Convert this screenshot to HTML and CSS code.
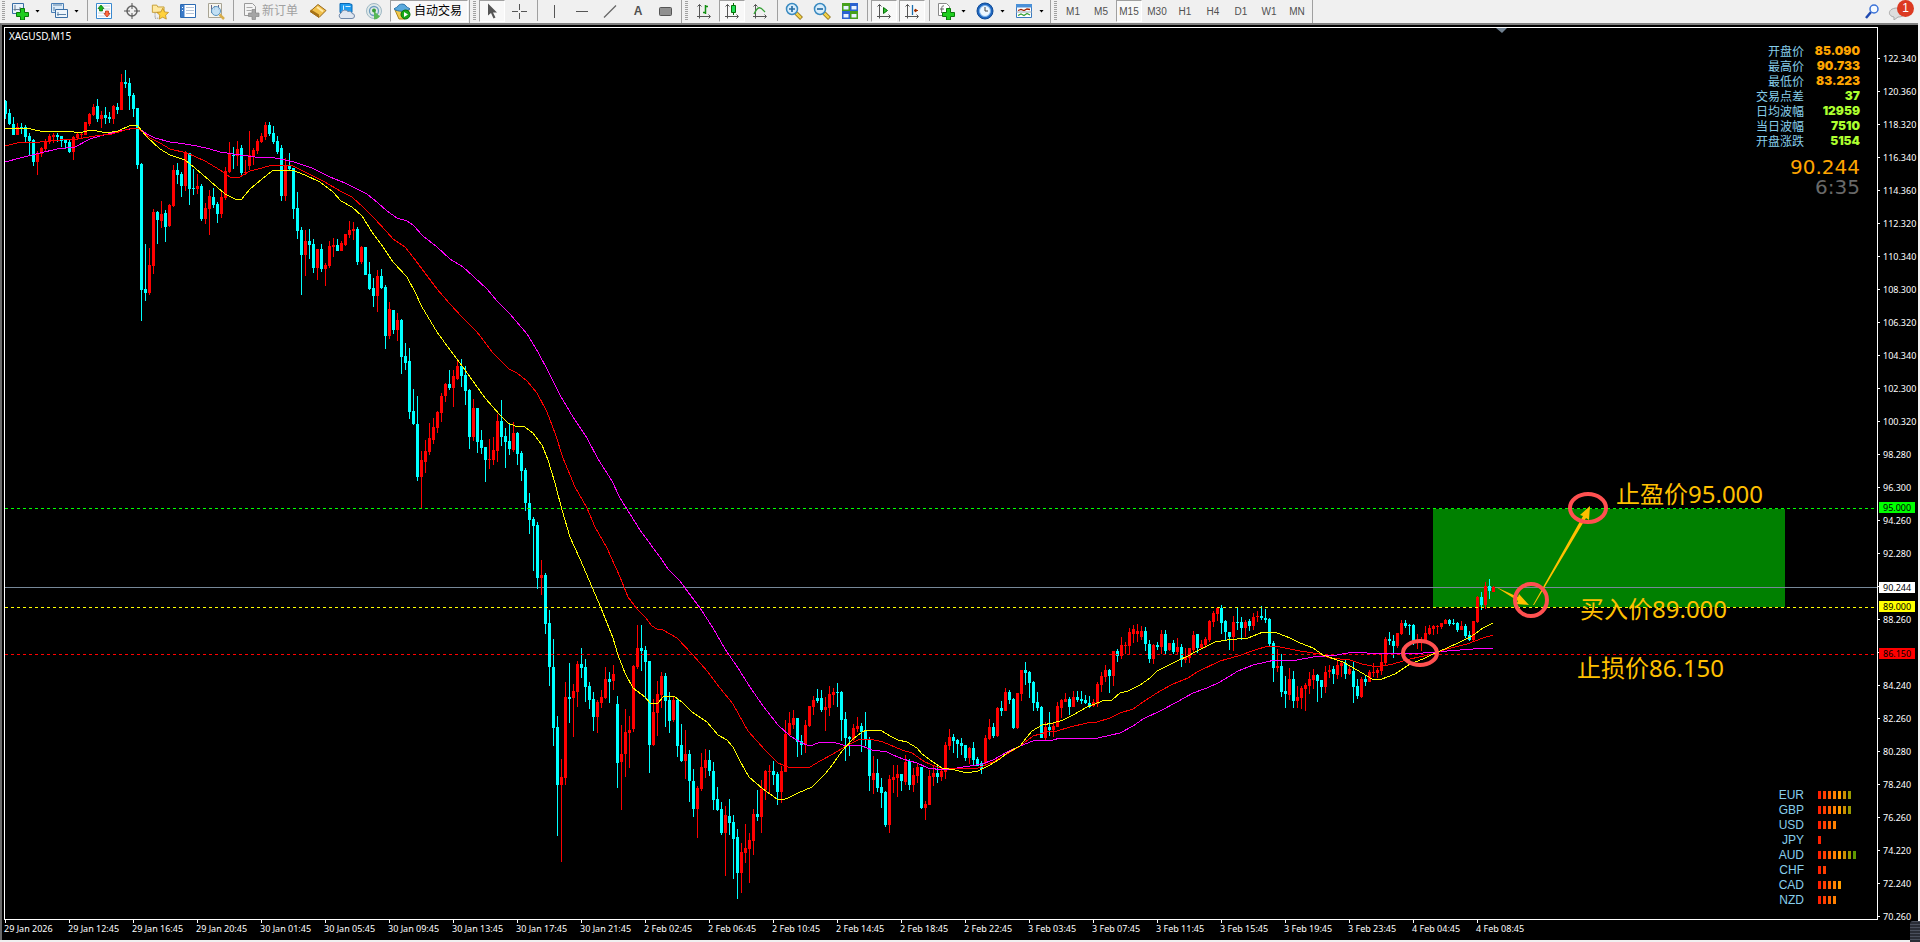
FILE: index.html
```
<!DOCTYPE html>
<html lang="zh-CN">
<head>
    <meta charset="UTF-8">
    <meta name="viewport" content="width=device-width, initial-scale=1.0">
    <title>XAGUSD,M15</title>
    <link rel="stylesheet" href="styles.css">
</head>
<body>
    <header class="toolbar">
        <div class="group first">
            <span class="grip"></span>
            <button class="tool" aria-label="新图表"><svg viewBox="0 0 18 18"><path d="M1.500 1.500h11v10h-11z" fill="#e8f2fb" stroke="#3a6ea5"/><path d="M4 3v6M2.500 7.500h8M9 5v4" stroke="#6b7f94" fill="none"/><path d="M9.500 6.500h4v4h4v4h-4v3.500h-4v-3.500h-4v-4h4z" fill="#1fce1f" stroke="#0a7a0a"/></svg></button>
            <button class="caret" aria-label="新图表菜单"></button>
            <button class="tool" aria-label="图表配置"><svg viewBox="0 0 18 18"><path d="M1.500 1.500h12v9h-12z" fill="#dcebf8" stroke="#4a7fb5"/><path d="M5.500 7.500h12v8h-12z" fill="#eef5fb" stroke="#3a6ea5"/><path d="M3 3h9M4 5v4M8 10v4M7 12.500h9" stroke="#5b82a8" fill="none"/></svg></button>
            <button class="caret" aria-label="图表配置菜单"></button>
            <span class="sep"></span>
            <button class="tool" aria-label="市场报价"><svg viewBox="0 0 18 18"><path d="M1.500 1.500h15v15h-15z" fill="#fff" stroke="#3a8ad0"/><path d="M3 4h12M3 7h12M3 11h12M3 14h12" stroke="#c5d5e5"/><path d="M6 3l3 3.500h-1.500v2.500h-3v-2.500h-1.500z" fill="#19b519" stroke="#087008" stroke-width=".7"/><path d="M12 15l-3-3.500h1.500v-2.500h3v2.500h1.500z" fill="#ff6b42" stroke="#b52b08" stroke-width=".7"/></svg></button>
            <button class="tool" aria-label="数据窗口"><svg viewBox="0 0 18 18"><circle cx="9" cy="9" r="5" fill="none" stroke="#666" stroke-width="1.500"/><path d="M9 1v6M9 11v6M1 9h6M11 9h6" stroke="#555"/></svg></button>
            <button class="tool" aria-label="导航"><svg viewBox="0 0 20 18"><path d="M1.500 2.500h5l1 2h7v6h-13z" fill="#ffe9a0" stroke="#c39a2b"/><path d="M4.500 11v6h3" fill="none" stroke="#777" stroke-dasharray="1 1"/><path d="M13 6l2 4 4.500.6-3.300 3 .8 4.400-4-2.100-4 2.100.8-4.400-3.300-3 4.500-.6z" fill="#ffd23e" stroke="#b8861b" stroke-width=".8"/></svg></button>
            <button class="tool" aria-label="终端"><svg viewBox="0 0 18 18"><path d="M1.500 2.500h15v13h-15z" fill="#fff" stroke="#2d6bb3"/><path d="M2 3h3.500v12h-3.500z" fill="#3a7ac8"/><path d="M7 5.500h8M7 8.500h8M7 11.500h8" stroke="#b5c5d8"/><path d="M3 5.500h1M3 8.500h1" stroke="#fff"/></svg></button>
            <button class="tool" aria-label="策略测试"><svg viewBox="0 0 18 18"><path d="M1.500 1.500h13v14h-13z" fill="#f7f5ee" stroke="#a8a494"/><path d="M4.500 3v8M7.500 4v4M11.500 3v5" stroke="#668"/><circle cx="9" cy="9" r="4.500" fill="#b9dcf5" fill-opacity=".85" stroke="#5b94bf"/><path d="M12.500 12.500l4.500 4.500" stroke="#d9ae4a" stroke-width="2.500"/></svg></button>
            <span class="sep"></span>
            <button class="tool wide off" disabled><svg viewBox="0 0 18 18"><path d="M2.500 1.500h8l3 3v9h-11z" fill="#f4f4f4" stroke="#9a9a9a"/><path d="M4.500 5.500h6M4.500 8.500h5" stroke="#aaa"/><path d="M10 7.500h3.500v3.500h3.500v3.500h-3.500v3h-3.500v-3h-3.500v-3.500h3.500z" fill="#a5a5a5" stroke="#888" stroke-width=".7"/></svg>新订单</button>
            <button class="tool" aria-label="MetaEditor"><svg viewBox="0 0 18 18"><path d="M1 9.500l8-7 8 6-7 7z" fill="#f2c14c" stroke="#96671a"/><path d="M1 9.500l9 6v-3l-8-5z" fill="#a87316"/><path d="M8 5l6 4.500" stroke="#ffe9a8" stroke-width="2"/></svg></button>
            <button class="tool" aria-label="虚拟主机"><svg viewBox="0 0 18 18"><path d="M3 1.500h9l3 1v8h-12z" fill="#1f9df0" stroke="#0b69b5"/><path d="M6.500 3.500v7M8.500 4.500h5" stroke="#d5efff"/><path d="M4 16.500a3 3 0 0 1 0-5.500 4 4 0 0 1 7-1.500 3 3 0 0 1 4 2 2.500 2.500 0 0 1 0 5z" fill="#dfe6f0" stroke="#6f87a8"/></svg></button>
            <button class="tool" aria-label="信号"><svg viewBox="0 0 18 18"><circle cx="9" cy="9" r="7.500" fill="#dfe9e9" stroke="#9fb8c4"/><circle cx="9" cy="9" r="4.500" fill="none" stroke="#6d9cc0" stroke-width="1.300"/><path d="M9 9v8.500a8 8 0 0 0 6-3z" fill="#58b858"/><circle cx="9" cy="8.500" r="2" fill="#3aa03a"/></svg></button>
            <button class="tool auto on"><svg viewBox="0 0 18 18"><path d="M2 8h14l-4 9h-6z" fill="#f2c94c" stroke="#ad8419"/><path d="M1 7c2-2 3-1 4-3s6-3 8 0c1 2 2 1 4 3-4 3-12 3-16 0z" fill="#5aa9dd" stroke="#2b74a8"/><circle cx="12.500" cy="12.500" r="4.500" fill="#18a818" stroke="#087008"/><path d="M11 10l4 2.500-4 2.500z" fill="#fff"/></svg>自动交易</button>
        </div>
        <div class="group">
            <span class="grip"></span>
            <button class="tool on" aria-label="光标"><svg viewBox="0 0 18 18"><path d="M5 1.500v12l3-2.500 2.500 5.500 2-1-2.500-5h4z" fill="#555"/></svg></button>
            <button class="tool" aria-label="十字准线"><svg viewBox="0 0 18 18"><path d="M8.500 2v6M8.500 11v6M1 9.500h6M10 9.500h6" stroke="#555"/></svg></button>
            <span class="sep"></span>
            <button class="tool" aria-label="垂直线"><svg viewBox="0 0 18 18"><path d="M9.500 3v13" stroke="#555"/></svg></button>
            <button class="tool" aria-label="水平线"><svg viewBox="0 0 18 18"><path d="M3 9.500h12" stroke="#555"/></svg></button>
            <button class="tool" aria-label="趋势线"><svg viewBox="0 0 18 18"><path d="M3 15.500l12-12" stroke="#666" stroke-width="1.300"/></svg></button>
            <button class="tool letter">A</button>
            <button class="tool" aria-label="矩形"><svg viewBox="0 0 18 18"><rect x="2.500" y="5.500" width="12" height="8" rx="1" fill="#909090" stroke="#555"/></svg></button>
        </div>
        <div class="group">
            <span class="grip"></span>
            <button class="tool" aria-label="柱状图"><svg viewBox="0 0 18 18"><path d="M4.500 2.500v14M2 14.500h13M2.500 4.500l2-2 2 2M13.500 12.500l2 2-2 2" stroke="#555" fill="none"/><path d="M10.500 3v9M8 10.500h2.500M10.500 4.500h2.500" stroke="#129012" stroke-width="1.500" fill="none"/></svg></button>
            <button class="tool on" aria-label="蜡烛图"><svg viewBox="0 0 18 18"><path d="M4.500 2.500v14M2 14.500h13M2.500 4.500l2-2 2 2M13.500 12.500l2 2-2 2" stroke="#555" fill="none"/><path d="M10.500 1v12" stroke="#087008"/><path d="M8.500 3.500h4v7h-4z" fill="#22e05a" stroke="#087008"/></svg></button>
            <button class="tool" aria-label="折线图"><svg viewBox="0 0 18 18"><path d="M4.500 2.500v14M2 14.500h13M2.500 4.500l2-2 2 2M13.500 12.500l2 2-2 2" stroke="#555" fill="none"/><path d="M3 12c4-8 6-8 11-2" stroke="#35a035" stroke-width="1.300" fill="none"/></svg></button>
            <span class="sep"></span>
            <button class="tool" aria-label="放大"><svg viewBox="0 0 18 18"><path d="M11 11l5.500 5.500" stroke="#8a6a14" stroke-width="4"/><path d="M11 11l5 5" stroke="#f2d24a" stroke-width="2.500"/><circle cx="7" cy="7" r="5.500" fill="#d8edfb" stroke="#3a8ac0" stroke-width="1.500"/><path d="M4 7h6M7 4v6" stroke="#2b6fa5" stroke-width="1.700"/></svg></button>
            <button class="tool" aria-label="缩小"><svg viewBox="0 0 18 18"><path d="M11 11l5.500 5.500" stroke="#8a6a14" stroke-width="4"/><path d="M11 11l5 5" stroke="#f2d24a" stroke-width="2.500"/><circle cx="7" cy="7" r="5.500" fill="#d8edfb" stroke="#3a8ac0" stroke-width="1.500"/><path d="M4 7h6" stroke="#2b6fa5" stroke-width="1.700"/></svg></button>
            <button class="tool" aria-label="平铺窗口"><svg viewBox="0 0 18 18"><path d="M1 1h8v8h-8zM9 9h8v8h-8z" fill="#46a01a"/><path d="M9 1h8v8h-8zM1 9h8v8h-8z" fill="#2a62d0"/><path d="M2.500 4h5v3.500h-5zM10.500 4h5v3.500h-5zM2.500 12h5v3.500h-5zM10.500 12h5v3.500h-5z" fill="#e8f2ff"/></svg></button>
            <span class="sep"></span>
            <button class="tool on" aria-label="自动滚动"><svg viewBox="0 0 18 18"><path d="M4.500 2.500v14M2 14.500h13M2.500 4.500l2-2 2 2M13.500 12.500l2 2-2 2" stroke="#555" fill="none"/><path d="M8.500 5.500l4 3-4 3z" fill="#2fc42f" stroke="#087008"/></svg></button>
            <button class="tool on" aria-label="图表平移"><svg viewBox="0 0 18 18"><path d="M4.500 2.500v14M2 14.500h13M2.500 4.500l2-2 2 2M13.500 12.500l2 2-2 2" stroke="#555" fill="none"/><path d="M9.500 3v10" stroke="#1a6fb0" stroke-width="1.300"/><path d="M15 8.500h-3M13 7l-2 1.500 2 1.500z" fill="#d0501a" stroke="#a03000"/></svg></button>
            <span class="sep"></span>
            <button class="tool" aria-label="指标"><svg viewBox="0 0 18 18"><path d="M1.500 1.500h8l3 3v9h-11z" fill="#fff" stroke="#8a8a8a"/><path d="M7 4c-3-1-2 3-2.500 7M3 7h4" stroke="#666" fill="none"/><path d="M9.500 6.500h4v4h4v4h-4v3.500h-4v-3.500h-4v-4h4z" fill="#1fce1f" stroke="#0a7a0a"/></svg></button>
            <button class="caret" aria-label="指标菜单"></button>
            <button class="tool" aria-label="周期"><svg viewBox="0 0 18 18"><circle cx="9" cy="9" r="8" fill="#1f66c0" stroke="#0e4a96"/><circle cx="9" cy="9" r="5.500" fill="#eef7ff" stroke="#7fb5ea"/><path d="M9 5v4h3" stroke="#444" fill="none"/></svg></button>
            <button class="caret" aria-label="周期菜单"></button>
            <button class="tool" aria-label="模板"><svg viewBox="0 0 18 18"><path d="M1.500 2.500h15v13h-15z" fill="#fff" stroke="#3a7ac0"/><path d="M1 2h16v3.500h-16z" fill="#4a90d8"/><path d="M3 8.500l3-1 3 1 3-1.500 3 .5" stroke="#a02000" stroke-width="1.300" fill="none"/><path d="M1 10h16" stroke="#9ab"/><path d="M3 13.500l3-1.500 3 1.500 3-2 3 1.500" stroke="#35a035" stroke-width="1.300" fill="none"/></svg></button>
            <button class="caret" aria-label="模板菜单"></button>
        </div>
        <div class="group">
            <span class="grip"></span>
            <button class="tool">M1</button>
            <button class="tool">M5</button>
            <button class="tool on">M15</button>
            <button class="tool">M30</button>
            <button class="tool">H1</button>
            <button class="tool">H4</button>
            <button class="tool">D1</button>
            <button class="tool">W1</button>
            <button class="tool">MN</button>
        </div>
        <div class="status">
            <button class="tool" aria-label="搜索"><svg viewBox="0 0 18 18"><path d="M7 10l-5 6" stroke="#1f49b0" stroke-width="2.500"/><circle cx="10" cy="7" r="4" fill="#f5faff" stroke="#3a72d8" stroke-width="1.500"/></svg></button>
            <button class="tool alerts" aria-label="消息"><svg viewBox="0 0 18 18"><path d="M9 6c10 0 10 9 1 9l-4 3v-3c-7-1-6-9 3-9z" fill="#ddd" stroke="#aaa"/></svg><span class="badge">1</span></button>
        </div>
    </header>

    <main class="chart">
        <section class="plot">
            <svg class="canvas" viewBox="5 28 1872 891" preserveAspectRatio="none">
                <rect x="1433" y="509" width="352" height="98" fill="#008000"/>
                <path d="M5 587.500H1877" stroke="#778899"/>
                <path id="bear" fill="#00ffff"/>
                <path id="bull" fill="#ff0000"/>
                <path d="M5 508.500H1877" class="level" stroke="#00ff00"/>
                <path d="M5 607.500H1877" class="level" stroke="#ffff00"/>
                <path d="M5 654.500H1877" class="level" stroke="#ff0000"/>
                <polyline class="ma" stroke="#ff00ff" points="5,162 20,158 40,153 57,149 75,147 90,139 100,136 120,131 130,129 138,128 147,134 155,138 170,142 185,144 197,146 210,149 220,152 240,155 255,157 275,158 285,160 294,162 312,168 330,177 345,183 353,187 367,194 378,203 387,211 397,218 407,221 413,225 423,236 437,247 450,259 463,267 473,276 487,289 497,301 510,314 527,334 538,352 548,371 560,395 573,417 587,438 598,459 612,481 620,498 640,530 662,560 668,569 680,581 685,588 700,608 713,628 725,649 738,668 750,687 763,706 778,725 790,736 802,743 807,745 813,745 820,742 833,742 843,745 862,746 872,750 887,752 893,755 903,759 917,763 928,768 943,770 957,768 970,766 982,764 993,760 1007,752 1020,746 1033,741 1042,740 1053,740 1060,738 1098,738 1120,733 1133,726 1143,719 1160,711 1177,702 1193,693 1207,688 1220,682 1238,671 1253,665 1275,660 1297,660 1313,657 1337,655 1353,652 1367,653 1393,654 1423,653 1447,651 1473,649 1493,648"/>
                <polyline class="ma" stroke="#ff0000" points="5,146 17,143 40,142 60,140 77,139 95,136 112,134 125,130 133,128 138,128 150,138 160,143 170,149 187,153 205,161 220,170 230,177 240,177 250,171 262,168 272,165 280,165 293,166 305,172 323,181 342,192 352,197 363,207 373,217 387,232 393,239 405,247 413,257 422,269 437,289 450,304 463,318 477,332 493,353 509,369 517,373 527,381 537,393 547,412 555,433 563,458 575,487 587,508 595,527 607,548 620,577 628,597 637,609 646,618 652,626 657,629 663,630 677,638 692,654 708,672 720,688 733,704 748,731 765,750 778,763 788,767 810,767 820,761 833,754 848,745 860,739 870,739 883,742 902,750 912,753 925,762 937,767 947,769 957,768 967,769 978,768 993,762 1007,754 1020,746 1033,736 1047,732 1057,731 1070,727 1087,723 1097,722 1110,718 1120,713 1133,709 1143,702 1160,691 1173,684 1188,678 1197,672 1220,661 1238,656 1255,650 1268,646 1280,647 1300,651 1320,654 1330,658 1350,660 1362,664 1377,667 1393,664 1410,659 1433,654 1447,649 1467,644 1483,638 1493,635"/>
                <polyline class="ma" stroke="#ffff00" points="5,129 26,128 40,131 70,131 78,133 92,130 107,133 118,131 131,125 137,125 147,137 160,149 170,155 185,160 195,168 210,181 225,194 235,199 241,200 250,189 262,179 272,171 278,170 292,170 305,175 320,182 333,192 341,201 352,207 362,216 372,232 383,247 393,262 407,277 415,292 422,307 437,332 450,350 460,363 470,377 485,398 500,415 508,423 515,426 525,427 533,433 542,445 548,460 555,483 562,510 570,537 580,559 592,587 601,608 613,638 618,655 625,673 633,688 645,697 650,703 654,704 658,703 664,696 675,697 682,702 692,712 707,722 718,735 727,740 733,747 740,761 749,777 763,789 777,799 782,800 788,798 798,793 812,787 825,774 833,764 842,751 853,739 862,732 867,730 875,730 882,731 890,736 898,740 907,742 917,748 922,754 933,762 942,768 955,770 967,773 978,771 988,766 1000,759 1007,753 1020,746 1027,737 1032,731 1042,725 1053,723 1063,720 1073,715 1087,707 1105,700 1112,700 1120,693 1128,691 1140,685 1150,678 1157,671 1177,661 1188,656 1197,651 1215,642 1227,640 1248,638 1263,632 1277,633 1290,638 1300,643 1313,648 1323,655 1343,662 1357,670 1372,679 1382,679 1395,674 1410,664 1423,659 1433,654 1447,648 1460,642 1470,637 1475,634 1483,628 1493,623"/>
                <path d="M1496 587l22 10 1-3 10 11-13-1 2-3z" fill="#ffc000"/>
                <path d="M1533 605l50-89-3-1 10-9-1 14-3-2-52 87z" fill="#ffc000"/>
                <ellipse cx="1588" cy="508" rx="18" ry="14" class="ring"/>
                <ellipse cx="1531" cy="600" rx="16" ry="16" class="ring"/>
                <ellipse cx="1420" cy="653" rx="17" ry="12" class="ring"/>
                <path d="M1496 28h11l-5 5z" fill="#708090"/>
                <text x="1616" y="503" class="note">止盈价95.000</text>
                <text x="1580" y="618" class="note">买入价89.000</text>
                <text x="1577" y="677" class="note">止损价86.150</text>
            </svg>
            <h1 class="symbol">XAGUSD,M15</h1>
            <div class="info">
                <table class="stats">
                    <tr><th>开盘价</th><td>85.090</td></tr>
                    <tr><th>最高价</th><td>90.733</td></tr>
                    <tr><th>最低价</th><td>83.223</td></tr>
                    <tr class="lime"><th>交易点差</th><td>37</td></tr>
                    <tr class="lime"><th>日均波幅</th><td>12959</td></tr>
                    <tr class="lime"><th>当日波幅</th><td>7510</td></tr>
                    <tr class="lime"><th>开盘涨跌</th><td>5154</td></tr>
                </table>
                <div class="last">90.244</div>
                <div class="timer">6:35</div>
            </div>
            <ul class="strength" id="strength"></ul>
        </section>
        <aside class="price-axis">
            <ul id="prices"></ul>
            <div id="tags"></div>
        </aside>
        <ul class="time-axis" id="times"></ul>
        <span class="scroll-handle"></span>
    </main>

    <script>
        // Cada vela: color (c = baja, r = sube), high, top, bottom, low
        var candles = `
c 100 101 114 119,c 109 113 124 125,c 117 124 135 135,r 123 127 135 135,c 123 127 129 134,c 125 127 137 143,c 133 136 141 155,c 139 140 162 166
r 151 154 162 175,r 147 148 154 157,r 139 141 149 152,r 134 136 142 144,r 133 135 137 143,c 133 135 137 142,c 136 136 141 147,c 140 140 143 148
c 140 142 152 153,r 136 137 152 160,r 132 134 138 140,r 132 134 135 138,r 122 122 135 135,r 113 114 124 126,r 104 107 115 116,c 99 106 119 122
r 111 115 119 128,c 107 115 118 124,c 112 117 119 123,r 105 106 119 124,c 103 107 110 114,r 74 82 110 110,c 70 82 84 88,c 78 83 96 110
c 93 95 109 117,c 108 108 165 169,c 163 164 290 321,c 244 289 293 301,r 248 265 293 295,r 209 212 266 274,c 211 212 220 244,r 201 214 221 228
c 210 213 227 242,r 204 205 226 227,r 165 170 206 207,c 163 170 175 184,c 172 174 186 197,r 151 152 186 191,c 153 153 189 205,c 169 188 189 195
r 174 186 189 194,c 184 186 219 221,r 203 208 219 224,r 190 196 209 235,c 188 197 205 208,c 202 204 214 223,r 191 197 214 218,r 167 171 198 200
r 142 154 172 173,c 147 155 156 169,r 141 149 156 166,c 145 148 173 176,r 160 172 173 175,r 131 155 166 170,r 148 150 156 165,r 139 141 151 154
r 133 136 142 143,r 122 125 137 140,c 122 125 134 136,c 126 133 142 144,c 136 141 152 154,c 145 148 196 201,r 158 165 196 201,c 153 165 169 171
c 168 168 209 219,c 192 208 231 239,c 227 230 255 295,r 230 241 255 276,c 229 241 245 259,c 239 244 268 273,r 249 249 268 280,c 244 249 269 272
r 263 265 269 286,r 241 246 266 268,r 238 245 247 257,c 239 245 251 251,r 241 243 251 251,r 234 234 245 246,r 221 230 235 238,r 222 229 231 240
c 227 229 262 265,r 246 247 262 264,c 247 247 275 275,c 262 274 289 290,c 278 288 296 307,r 270 276 296 312,c 269 276 288 289,c 285 287 336 349
r 302 309 336 339,c 310 310 330 334,r 313 320 330 341,c 319 320 357 374,c 343 356 363 370,c 348 361 412 419,c 389 411 424 425,c 396 424 477 481
r 451 460 477 508,r 440 451 462 473,r 423 438 452 455,r 418 427 440 444,r 411 412 428 433,r 393 396 413 422,r 383 384 396 402,c 370 384 388 390
r 370 376 388 407,r 361 366 379 380,c 359 366 376 387,c 366 375 391 405,c 389 390 437 449,r 399 408 437 441,c 408 408 442 453,c 430 440 448 454
c 447 447 460 482,r 439 459 460 469,r 437 450 460 465,r 414 421 451 462,c 400 421 437 446,c 428 436 442 468,c 424 441 449 455,r 422 433 450 452
c 432 433 454 465,c 451 453 471 481,c 468 470 503 511,c 493 503 520 534,c 517 519 526 571,c 522 525 578 589,r 560 575 578 595,c 573 575 624 634
c 610 623 667 686,c 639 667 728 746,c 716 727 785 836,r 759 777 785 862,r 682 697 778 785,c 663 697 699 723,r 684 691 698 737,r 661 664 692 707
c 648 664 668 678,c 659 667 687 702,c 682 686 700 709,c 692 699 717 731,r 700 702 717 733,r 690 697 703 708,r 667 679 698 699,c 672 679 682 703
r 665 674 681 690,c 696 704 763 788,r 725 754 762 810,r 709 732 754 777,r 716 730 733 768,r 665 666 729 732,r 625 648 667 669,c 625 648 651 671
c 646 650 662 699,c 661 661 745 773,r 699 712 745 746,r 681 694 713 736,r 672 676 695 708,c 673 676 701 727,c 692 700 721 733,r 696 700 720 722
c 699 700 746 757,c 724 745 761 762,r 730 754 761 779,c 750 754 781 802,c 769 781 809 817,r 786 788 809 838,r 753 767 789 791,r 749 760 768 778
c 750 760 771 776,c 762 771 800 810,c 787 799 810 811,c 802 809 833 835,r 806 815 833 876,c 799 816 823 835,c 815 822 839 879,c 829 837 873 899
r 843 852 873 893,r 824 848 853 863,r 833 840 849 883,r 809 814 841 855,c 790 814 817 821,r 780 789 817 833,r 770 771 790 800,r 765 771 772 794
c 761 771 775 785,c 772 774 792 805,r 766 771 792 803,r 720 734 772 772,r 712 723 735 735,r 710 718 725 729,c 718 718 742 757,c 735 741 745 755
r 720 725 745 753,r 706 706 726 727,r 696 700 707 715,c 689 698 701 703,c 690 698 710 712,r 697 707 710 731,r 686 694 708 716,r 688 692 695 705
c 683 692 693 707,c 691 692 720 741,c 712 719 738 761,c 736 737 739 756,r 724 728 740 741,r 717 726 729 732,c 723 726 732 752,c 712 730 739 746
c 737 739 776 791,r 756 773 780 794,c 759 773 788 792,c 778 787 793 808,c 791 792 825 827,r 775 779 825 833,r 765 777 780 793,r 765 774 778 797
c 774 774 781 791,r 755 762 782 785,c 759 761 785 790,r 768 775 785 792,r 764 767 776 783,c 767 767 808 809,r 801 804 808 820,r 770 776 805 805
r 765 773 777 786,c 764 773 777 783,r 767 771 777 781,r 742 745 772 779,r 729 737 746 750,c 734 737 741 753,c 739 740 744 758,c 738 743 746 755
c 745 745 758 761,r 747 748 758 764,c 742 748 760 765,c 757 759 766 766,c 761 763 769 774,r 735 738 763 764,r 719 727 739 740,c 723 727 736 738
r 707 708 736 737,c 701 708 711 716,r 688 692 711 711,c 690 692 700 704,c 698 699 728 729,r 693 693 728 729,r 670 670 694 701,c 662 670 673 685
c 671 672 683 698,c 681 682 703 711,c 692 702 708 711,c 706 707 738 738,r 722 727 738 740,c 712 727 730 736,r 723 726 730 737,r 702 706 727 727
r 699 700 708 718,r 693 699 702 702,c 697 699 707 715,r 691 697 707 707,c 691 697 700 702,c 691 699 701 704,c 695 700 703 704,c 696 703 707 708
r 699 702 706 707,r 682 684 704 707,r 672 676 685 692,r 665 670 677 682,c 669 670 676 693,r 651 651 676 686,c 649 651 656 662,r 637 645 656 659
r 642 645 646 654,r 628 632 646 654,r 625 629 634 643,r 624 631 634 642,r 626 631 637 640,c 627 631 644 651,c 640 644 659 663,r 644 645 659 664
c 642 645 647 650,r 630 634 647 654,c 630 634 651 654,r 643 643 650 651,c 640 643 652 654,r 638 647 652 655,c 644 647 660 667,r 648 657 660 663
r 648 648 658 663,r 631 635 650 652,c 634 634 648 653,r 640 644 648 649,r 637 639 645 648,r 620 621 640 642,r 611 613 622 627,r 607 608 614 621
c 605 608 623 634,c 620 621 632 640,c 632 632 637 650,r 616 622 637 651,c 608 622 623 630,c 617 622 628 640,r 620 622 628 637,c 619 621 626 631
r 613 617 626 630,r 611 616 617 622,c 606 616 618 620,c 609 618 620 623,c 618 619 644 646,c 641 643 668 682,r 649 666 668 672,c 654 666 692 697
c 676 691 694 708,r 668 679 695 700,c 671 679 701 708,r 686 697 701 708,r 686 688 698 709,r 683 685 689 711,r 672 679 686 694,r 669 675 680 689
c 674 675 681 702,c 680 680 687 698,r 666 672 687 693,r 665 670 672 678,c 666 669 674 684,r 661 665 675 679,r 662 663 666 677,c 660 663 674 679
r 665 669 674 675,c 661 671 687 703,c 679 686 696 699,r 677 679 697 698,c 676 679 682 686,r 670 672 682 682,r 663 672 673 677,r 668 670 673 678
r 654 662 671 675,r 637 639 663 666,c 632 639 641 645,c 635 641 646 658,r 633 633 646 648,r 620 623 634 635,c 620 623 626 628,c 624 625 626 635
c 624 625 641 645,r 634 641 643 649,r 637 641 643 651,r 626 633 641 643,r 625 628 634 635,r 625 626 629 635,r 625 626 627 634,r 623 623 627 629
r 619 620 624 624,c 619 620 624 626,c 619 623 624 625,c 622 623 630 632,r 621 626 630 630,c 624 626 636 638,c 631 635 640 641,r 621 621 640 641
r 596 597 622 623,c 592 597 605 610,r 582 586 605 609,c 579 586 591 599,r 586 587 592 592`;

        var paths = { c: '', r: '' };
        candles.trim().split(/[,\n]/).forEach(function (line, i) {
            var v = line.split(' ');
            var x = 5 + i * 4;
            paths[v[0]] += 'M' + x + ' ' + v[1] + 'h1V' + v[4] + 'h-1z';
            paths[v[0]] += 'M' + (x - 1) + ' ' + v[2] + 'h3V' + v[3] + 'h-3z';
        });
        document.getElementById('bear').setAttribute('d', paths.c);
        document.getElementById('bull').setAttribute('d', paths.r);

        var prices = ['122.340', '120.360', '118.320', '116.340', '114.360', '112.320', '110.340', '108.300', '106.320',
            '104.340', '102.300', '100.320', '98.280', '96.300', '94.260', '92.280', '', '88.260', '',
            '84.240', '82.260', '80.280', '78.240', '76.260', '74.220', '72.240', '70.260'];
        document.getElementById('prices').innerHTML = prices.map(p => `<li>${p}</li>`).join('');

        var tags = [['95.000', 'lime', 474], ['90.244', 'white', 554], ['89.000', 'yellow', 573], ['86.150', 'red', 620]];
        document.getElementById('tags').innerHTML = tags.map(t =>
            `<span class="tag ${t[1]}" style="top: ${t[2] / 891 * 100}%">${t[0]}</span>`).join('');

        var times = ['29 Jan 2026', '29 Jan 12:45', '29 Jan 16:45', '29 Jan 20:45', '30 Jan 01:45', '30 Jan 05:45',
            '30 Jan 09:45', '30 Jan 13:45', '30 Jan 17:45', '30 Jan 21:45', '2 Feb 02:45', '2 Feb 06:45',
            '2 Feb 10:45', '2 Feb 14:45', '2 Feb 18:45', '2 Feb 22:45', '3 Feb 03:45', '3 Feb 07:45',
            '3 Feb 11:45', '3 Feb 15:45', '3 Feb 19:45', '3 Feb 23:45', '4 Feb 04:45', '4 Feb 08:45'];
        document.getElementById('times').innerHTML = times.map(t => `<li>${t}</li>`).join('');

        var strength = { EUR: 7, GBP: 7, USD: 4, JPY: 1, AUD: 8, CHF: 2, CAD: 5, NZD: 4 };
        document.getElementById('strength').innerHTML = Object.keys(strength).map(k =>
            `<li><span class="code">${k}</span>${'<i></i>'.repeat(strength[k])}</li>`).join('');
    </script>
</body>
</html>
```
FILE: styles.css
```
* {
    box-sizing: border-box;
}
body {
    margin: 0;
    height: 100vh;
    display: flex;
    flex-direction: column;
    overflow: hidden;
    background-color: #f0f0f0;
    font-family: "Liberation Sans", "Noto Sans CJK SC", sans-serif;
}
ul {
    margin: 0;
    padding: 0;
    list-style: none;
}

/* Toolbar */
.toolbar {
    display: flex;
    height: 23px;
    flex: none;
    background-color: #f0f0f0;
}
.group {
    display: flex;
    flex: none;
    padding: 0 1px 0 3px;
    border-right: 1px solid #a0a0a0;
}
.group.first {
    padding-left: 2px;
}
.grip {
    width: 3px;
    height: 19px;
    margin: 1px 2px 0 0;
    background: repeating-linear-gradient(#a0a0a0 0 1px, #f0f0f0 1px 2px);
}
.group.first .grip {
    margin-right: 1px;
}
.sep {
    width: 1px;
    height: 21px;
    margin: 0 2px 0 3px;
    background-color: #a0a0a0;
}
.tool {
    display: flex;
    align-items: center;
    justify-content: center;
    width: 28px;
    height: 22px;
    padding: 0;
    border: 1px solid transparent;
    background: none;
    color: #505050;
    font-family: inherit;
    font-size: 10px;
}
.tool svg {
    width: 18px;
    height: 18px;
    flex: none;
}
.tool.on {
    width: 26px;
    margin: 0 1px;
    border-color: #a0a0a0 #fff #fff #a0a0a0;
    background-color: #f8f8f8;
}
.tool.wide,
.tool.auto {
    justify-content: flex-start;
    gap: 2px;
    width: 68px;
    padding-left: 5px;
    font-size: 12px;
    line-height: 16px;
}
.tool.auto {
    width: 78px;
    margin: 0 0 0 2px;
    padding-left: 2px;
    gap: 3px;
    color: #000;
}
.tool.off {
    color: #a0a0a0;
}
.tool.letter {
    font-size: 12px;
    font-weight: bold;
}
.caret {
    display: flex;
    align-items: center;
    width: 11px;
    height: 22px;
    padding: 0 0 0 1px;
    border: 0;
    background: none;
}
.caret::before {
    content: "";
    width: 5px;
    height: 3px;
    background-color: #000;
    clip-path: polygon(0 0, 100% 0, 50% 100%);
}
.status {
    display: flex;
    margin-left: auto;
    padding-right: 5px;
}
.alerts {
    position: relative;
    justify-content: flex-start;
}
.badge {
    position: absolute;
    top: -1px;
    right: 0;
    width: 17px;
    height: 17px;
    border-radius: 50%;
    background-color: #dc3a22;
    color: #fff;
    font-size: 12px;
    line-height: 17px;
    text-align: center;
}

/* Chart window */
.chart {
    position: relative;
    flex: 1;
    display: grid;
    grid-template-columns: 1fr 40px;
    grid-template-rows: 1fr 20px;
    margin: 0 2px 2px 0;
    padding: 2px 0 0 2px;
    border: 2px solid #696969;
    border-top-color: #808080;
    border-right: 0;
    border-bottom: 0;
    background-color: #000;
    color: #fff;
    font-family: "Noto Sans", sans-serif;
    font-size: 9px;
    line-height: 12px;
}
.plot {
    position: relative;
    border: 1px solid #fff;
    min-height: 0;
}
.canvas {
    position: absolute;
    width: 100%;
    height: 100%;
}
.level {
    stroke-dasharray: 3 3;
    shape-rendering: crispEdges;
}
.ma {
    fill: none;
    shape-rendering: crispEdges;
}
.ring {
    fill: none;
    stroke: #ff5050;
    stroke-width: 4;
}
.note {
    fill: #ffc000;
    font-family: "Noto Sans", "Noto Sans CJK SC", sans-serif;
    font-size: 24px;
}
.symbol {
    position: absolute;
    top: 2px;
    left: 4px;
    margin: 0;
    font-size: 10px;
    font-weight: normal;
}

/* Price summary */
.info {
    position: absolute;
    top: 15px;
    right: 17px;
    text-align: right;
    font-family: "DejaVu Sans", sans-serif;
    font-size: 20px;
    line-height: 20px;
}
.stats {
    margin: 0 0 9px auto;
    border-collapse: collapse;
    font-size: 12px;
    line-height: 15px;
}
.stats th,
.stats td {
    height: 15px;
    padding: 0;
    text-align: right;
}
.stats th {
    color: #87ceeb;
    font-family: "Noto Sans CJK SC", sans-serif;
    font-weight: normal;
}
.stats td {
    width: 56px;
    color: #ffa500;
    font-family: Inter, "DejaVu Sans", sans-serif;
    font-weight: 900;
}
.stats .lime td {
    color: #adff2f;
}
.last {
    color: #ffa500;
}
.timer {
    color: #696969;
}

/* Currency strength */
.strength {
    position: absolute;
    right: 0;
    bottom: 12px;
    width: 102px;
}
.strength li {
    display: flex;
    align-items: center;
    gap: 2px;
    height: 15px;
}
.code {
    width: 29px;
    margin-right: 12px;
    color: #87ceeb;
    font-family: "Liberation Sans", sans-serif;
    font-size: 12px;
    text-align: right;
}
.strength i {
    width: 3px;
    height: 8px;
    background-color: #ff2000;
}
.strength i:nth-of-type(2) { background-color: #ff4000; }
.strength i:nth-of-type(3) { background-color: #ff6000; }
.strength i:nth-of-type(4) { background-color: #ff8000; }
.strength i:nth-of-type(5) { background-color: #ff9c00; }
.strength i:nth-of-type(6) { background-color: #cc9000; }
.strength i:nth-of-type(7) { background-color: #999900; }
.strength i:nth-of-type(8) { background-color: #609800; }

/* Axes */
.price-axis {
    position: relative;
    min-height: 0;
}
.price-axis ul {
    display: flex;
    flex-direction: column;
    height: calc(100% - 2px);
    margin-top: 15px;
}
.price-axis li {
    display: flex;
    flex: 1;
    align-items: center;
    gap: 3px;
}
.price-axis li::before {
    content: "";
    width: 2px;
    height: 1px;
    background-color: #fff;
}
.tag {
    position: absolute;
    left: 1px;
    width: 36px;
    height: 11px;
    padding-left: 4px;
    color: #000;
    line-height: 11px;
}
.tag.lime { background-color: #00ff00; }
.tag.white { background-color: #fff; }
.tag.yellow { background-color: #ffff00; }
.tag.red { background-color: #ff0000; }
.time-axis {
    display: flex;
    min-width: 0;
}
.time-axis li {
    width: 64px;
    flex: none;
    white-space: nowrap;
}
.time-axis li::before {
    content: "";
    display: block;
    width: 1px;
    height: 3px;
    margin-left: 1px;
    background-color: #fff;
}
.scroll-handle {
    position: absolute;
    right: -2px;
    bottom: -2px;
    width: 10px;
    height: 21px;
    border-top-left-radius: 3px;
    background: repeating-linear-gradient(#4a4f5c 0 1px, #2a2d36 1px 3px);
}
```
